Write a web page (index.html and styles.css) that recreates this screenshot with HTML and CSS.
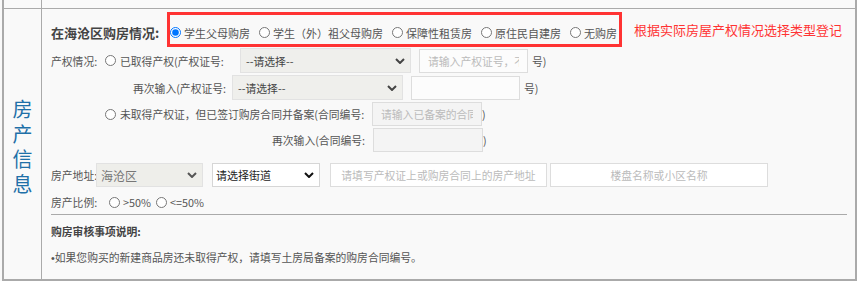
FILE: index.html
```html
<!DOCTYPE html>
<html lang="zh-CN">
<head>
<meta charset="utf-8">
<title>房产信息</title>
<link rel="stylesheet" href="styles.css">
</head>
<body>
<div class="frame">
  <div class="toprow"><div class="side-top"></div><div class="main-top"></div></div>
  <div class="row">
    <div class="side"><span class="side-title">房产信息</span></div>
    <div class="main">
      <div class="r1">
        <span class="title">在海沧区购房情况:</span>
        <div class="redbox">
          <label class="opt"><input class="rd" type="radio" name="t" checked>学生父母购房</label>
          <label class="opt"><input class="rd" type="radio" name="t">学生（外）祖父母购房</label>
          <label class="opt"><input class="rd" type="radio" name="t">保障性租赁房</label>
          <label class="opt"><input class="rd" type="radio" name="t">原住民自建房</label>
          <label class="opt"><input class="rd" type="radio" name="t">无购房</label>
        </div>
        <span class="hint">根据实际房屋产权情况选择类型登记</span>
      </div>

      <div class="r2">
        <span class="lbl-w54">产权情况:</span>
        <input class="rd rd4" type="radio" name="c">
        <span class="txt-w120">已取得产权(产权证号:</span>
        <div class="sel sel-gray sel-171"><span>--请选择--</span><svg class="chev" viewBox="0 0 10 6" width="10" height="6"><path d="M1 1 L5 5 L9 1" fill="none" stroke="#444" stroke-width="2"/></svg></div>
        <input class="inp inp-109" type="text" placeholder="请输入产权证号，不有">
        <span class="suffix">号)</span>
      </div>

      <div class="r3">
        <span class="txt-w99">再次输入(产权证号:</span>
        <div class="sel sel-gray sel-171"><span>--请选择--</span><svg class="chev" viewBox="0 0 10 6" width="10" height="6"><path d="M1 1 L5 5 L9 1" fill="none" stroke="#444" stroke-width="2"/></svg></div>
        <input class="inp inp-109" type="text">
        <span class="suffix">号)</span>
      </div>

      <div class="r4">
        <input class="rd rd4" type="radio" name="c">
        <span class="txt-w252">未取得产权证，但已签订购房合同并备案(合同编号:</span>
        <input class="inp inp-110 inp-gray" type="text" placeholder="请输入已备案的合同编号">
        <span>)</span>
      </div>

      <div class="r5">
        <span class="txt-w101">再次输入(合同编号:</span>
        <input class="inp inp-110 inp-gray" type="text">
        <span>)</span>
      </div>

      <div class="r6">
        <span class="lbl-w45">房产地址:</span>
        <div class="sel sel-district"><span>海沧区</span><svg class="chev" viewBox="0 0 10 6" width="10" height="6"><path d="M1 1 L5 5 L9 1" fill="none" stroke="#555" stroke-width="2"/></svg></div>
        <div class="sel sel-street"><span>请选择街道</span><svg class="chev" viewBox="0 0 10 6" width="10" height="6"><path d="M1 1 L5 5 L9 1" fill="none" stroke="#111" stroke-width="2"/></svg></div>
        <input class="inp inp-addr" type="text" placeholder="请填写产权证上或购房合同上的房产地址">
        <input class="inp inp-estate" type="text" placeholder="楼盘名称或小区名称">
      </div>

      <div class="r7">
        <span class="lbl-w58">房产比例:</span>
        <label class="opt"><input class="rd" type="radio" name="p">&gt;50%</label>
        <label class="opt opt2"><input class="rd" type="radio" name="p">&lt;=50%</label>
      </div>

      <div class="divider"></div>

      <div class="note-title">购房审核事项说明:</div>
      <div class="note"><span class="bullet">•</span>如果您购买的新建商品房还未取得产权，请填写土房局备案的购房合同编号。</div>
    </div>
  </div>
</div>
</body>
</html>
```

FILE: styles.css
```css
html, body {
  margin: 0;
  padding: 0;
  background: #f9f9f9;
}
body {
  font-family: "Noto Sans CJK SC", "Microsoft YaHei", "Noto Sans", sans-serif;
  font-size: 10.8px;
  color: #555;
  overflow: hidden;
}
.frame {
  margin-left: 2px;
  width: 851px;
  border-left: 2px solid #aaa;
  border-right: 2px solid #aaa;
  border-bottom: 2px solid #aaa;
  background: #f9f9f9;
}
.toprow {
  display: flex;
  height: 8px;
  border-bottom: 1px solid #aaa;
}
.side-top {
  width: 37px;
  border-right: 1px solid #aaa;
}
.row {
  display: flex;
  height: 270px;
}
.side {
  width: 37px;
  flex: none;
  border-right: 1px solid #aaa;
  display: flex;
  align-items: center;
  justify-content: center;
}
.side-title {
  width: 20px;
  font-size: 20px;
  line-height: 25px;
  color: #1f70a8;
  text-align: center;
  padding-top: 3px;
}
.main {
  flex: 1;
  padding: 3px 0 0 9px;
}
.r1, .r2, .r3, .r4, .r5, .r6, .r7 {
  display: flex;
  align-items: center;
  white-space: nowrap;
}
.r1 { height: 35px; }
.r2 { height: 27px; }
.r3 { height: 27px; padding-left: 82px; }
.r4 { height: 26px; padding-left: 54px; }
.r5 { height: 26px; padding-left: 221px; }
.r6 { height: 26px; margin-top: 9px; }
.r7 { height: 20px; margin-top: 4px; }

.title {
  width: 116px;
  padding-top: 6px;
  font-size: 13px;
  font-weight: bold;
  color: #444;
}
.redbox {
  box-sizing: border-box;
  width: 455px;
  height: 35px;
  border: 3px solid #f33;
  padding-top: 6px;
  display: flex;
  align-items: center;
  gap: 9px;
  font-size: 11px;
}
.opt {
  display: flex;
  align-items: center;
}
.rd {
  width: 11px;
  height: 11px;
  margin: 0 3px 0 0;
  flex: none;
}
.rd4 { margin-right: 4px; }
.hint {
  margin-left: 12px;
  font-size: 13px;
  color: #f33;
}
.lbl-w54 { width: 54px; }
.lbl-w45 { width: 45px; }
.lbl-w58 { width: 58px; }
.txt-w120 { width: 120px; }
.txt-w99 { width: 99px; }
.txt-w252 { width: 252px; }
.txt-w101 { width: 101px; }

.sel {
  box-sizing: border-box;
  height: 25px;
  display: flex;
  align-items: center;
  justify-content: space-between;
  padding: 0 5px 0 5px;
  border: 1px solid #e2e2e2;
  font-size: 10.8px;
  color: #444;
  flex: none;
}
.sel-gray { background: #efefec; }
.sel-171 { width: 171px; }
.chev { flex: none; }
.sel-district {
  width: 107px;
  height: 24px;
  background: #eeeeea;
  color: #777;
  font-size: 12px;
  padding-left: 4px;
}
.sel-street {
  width: 108px;
  height: 24px;
  margin-left: 9px;
  background: #fff;
  border-color: #d6d6d6;
  color: #222;
  font-size: 11px;
  padding-left: 3px;
}
.inp {
  box-sizing: border-box;
  height: 24px;
  margin: 0;
  padding: 0 8px;
  border: 1px solid #ddd;
  background: #fcfcfc;
  font-family: inherit;
  font-size: 10.8px;
  color: #444;
  outline: none;
  flex: none;
}
.inp::placeholder { color: #bbb; }
.inp-109 { width: 109px; margin-left: 8px; }
.inp-110 { width: 110px; }
.inp-gray { background: #f4f4f4; }
.inp-addr {
  width: 217px;
  margin-left: 10px;
  background: #fff;
  text-align: center;
}
.inp-estate {
  width: 218px;
  margin-left: 3px;
  background: #fff;
  text-align: center;
}
.suffix { margin-left: 4px; }
.opt2 { margin-left: 5px; }

.divider {
  margin: 2px 8px 0 0;
  border-top: 1px solid #aaa;
}
.note-title {
  margin-top: 6px;
  height: 20px;
  line-height: 20px;
  font-weight: bold;
  color: #444;
}
.note {
  margin-top: 6px;
  height: 20px;
  line-height: 20px;
}
.bullet {
  font-family: "Liberation Sans", sans-serif;
}
```
